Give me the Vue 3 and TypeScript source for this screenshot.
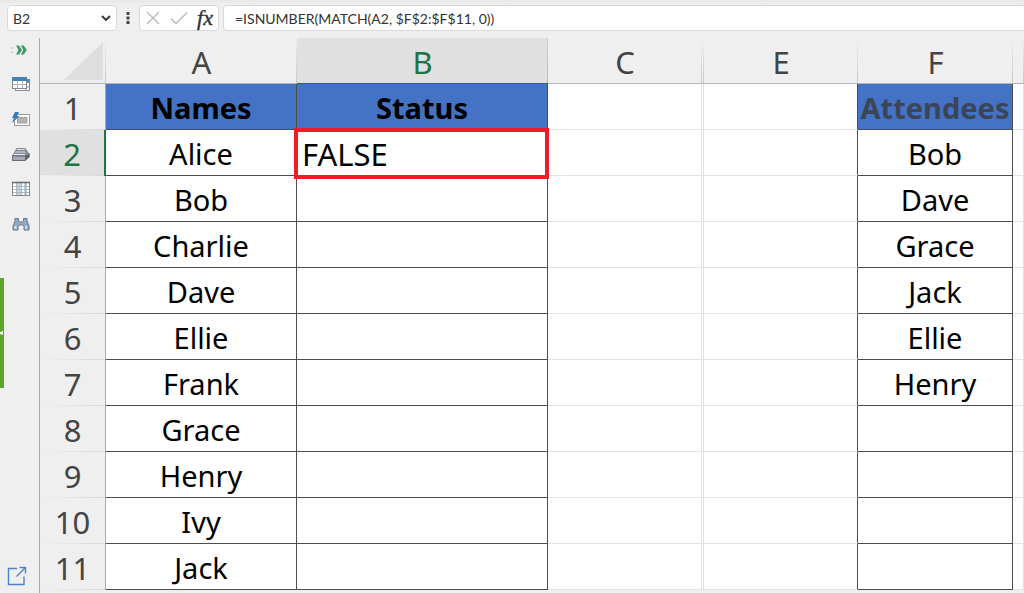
<script setup lang="ts">
import { ref } from 'vue'

interface Row {
  n: number
  name: string
  status: string
  attendee: string
}

const nameBox = ref('B2')
const formula = ref('=ISNUMBER(MATCH(A2, $F$2:$F$11, 0))')
const columns = ['A', 'B', 'C', '', 'E', 'F', '']

const names = ['Names', 'Alice', 'Bob', 'Charlie', 'Dave', 'Ellie', 'Frank', 'Grace', 'Henry', 'Ivy', 'Jack']
const attendees = ['Attendees', 'Bob', 'Dave', 'Grace', 'Jack', 'Ellie', 'Henry']

const rows: Row[] = names.map((name, i) => ({
  n: i + 1,
  name,
  status: i === 0 ? 'Status' : i === 1 ? 'FALSE' : '',
  attendee: attendees[i] ?? '',
}))
</script>

<template>
  <div class="app">
    <header class="bar">
      <div class="box name-box">
        <input v-model="nameBox" class="name-input" type="text" aria-label="Name box" />
        <button class="plain" type="button" aria-label="Show names">
          <svg width="12" height="8" viewBox="0 0 12 8"><path d="M2 2 6 6 10 2" fill="none" stroke="#333" stroke-width="1.9" /></svg>
        </button>
      </div>
      <svg class="dots" width="4" height="14" viewBox="0 0 4 14" fill="#444">
        <rect x=".5" y="1" width="3" height="3" /><rect x=".5" y="5.5" width="3" height="3" /><rect x=".5" y="10" width="3" height="3" />
      </svg>
      <div class="box tools">
        <button class="plain" type="button" aria-label="Cancel">
          <svg width="16" height="16" viewBox="0 0 16 16"><path d="M2 2 14 14M14 2 2 14" fill="none" stroke="#b9b9b9" stroke-width="1.3" /></svg>
        </button>
        <button class="plain" type="button" aria-label="Enter">
          <svg width="20" height="16" viewBox="0 0 20 16"><path d="M2 8.5 7 13.5 18 2.5" fill="none" stroke="#b9b9b9" stroke-width="1.4" /></svg>
        </button>
        <button class="plain fx" type="button" aria-label="Insert function">fx</button>
      </div>
      <input v-model="formula" class="box formula" type="text" aria-label="Formula bar" />
    </header>

    <div class="body">
      <nav class="side" aria-label="Tools">
        <button class="plain tool expand" type="button" aria-label="Expand">
          <svg width="20" height="12" viewBox="0 0 20 12">
            <path d="M0 4h1.500M0 8h1.500" stroke="#bbb" stroke-width="1.300" />
            <path d="M5 1.500h3l3 4.500-3 4.500H5L7.500 6zM9.800 1.500h3l3 4.500-3 4.500h-3L12.300 6z" fill="#3f9a68" />
          </svg>
        </button>
        <button class="plain tool" type="button" aria-label="Tables">
          <svg width="20" height="16" viewBox="0 0 20 16">
            <rect x="4.500" y="3.500" width="14" height="11" fill="#fff" stroke="#8a9098" />
            <path d="M4 3h15v4H4z" fill="#5d8fc2" />
            <path d="M15 7v7M5 11h13" stroke="#8a9098" />
            <rect x="1.500" y="1.500" width="14" height="11" fill="#fff" stroke="#858b93" />
            <path d="M1 1h15v4H1z" fill="#4580bb" />
            <path d="M6.500 5v7M11.500 5v7M2 8.500h13" stroke="#b2b7bd" />
          </svg>
        </button>
        <button class="plain tool" type="button" aria-label="Quick form">
          <svg width="20" height="16" viewBox="0 0 20 16">
            <rect x="3.500" y="3.500" width="15" height="11" fill="#fff" stroke="#9a9a9a" />
            <rect x="6.500" y="6.500" width="9.500" height="5.500" fill="#b3b3b3" stroke="#a3a3a3" />
            <path d="M4 1h4L6 5h2.500L1 12l2-5H1z" fill="#3979b8" />
          </svg>
        </button>
        <button class="plain tool" type="button" aria-label="Workbooks">
          <svg width="20" height="16" viewBox="0 0 20 16">
            <path d="M5.500 2h9l4 6v3l-4 3.500H1.500v-5z" fill="#8e939d" />
            <path d="M6 2.500h8l1 2H5z" fill="#e5e7ea" stroke="#777e88" stroke-width=".8" />
            <path d="M4.500 5h9.500l1.500 2H3z" fill="#dde0e5" stroke="#777e88" stroke-width=".8" />
            <path d="M3 7.500h11l1 2H1.500z" fill="#eceef1" stroke="#777e88" stroke-width=".8" />
            <path d="M1.500 10h13v4.500h-13z" fill="#a6a8b5" stroke="#666b78" />
            <path d="m14.500 10 4-3v4l-4 3.500z" fill="#59616d" />
          </svg>
        </button>
        <button class="plain tool" type="button" aria-label="Columns">
          <svg width="20" height="16" viewBox="0 0 20 16">
            <rect x="1.500" y="1" width="17" height="14" fill="#fff" />
            <path d="M6 2h4v13H6zM13 2h3v13h-3z" fill="#c2d6ea" />
            <path d="M1.500 5.500h17M1.500 8.500h17M1.500 11.500h17M5.500 1v14M10.500 1v14M14.500 1v14" stroke="#a5a9ad" stroke-width=".8" />
            <rect x="1.500" y="1.500" width="17" height="13" fill="none" stroke="#888" />
            <path d="M1 1.500h18" stroke="#6d6d6d" stroke-width="1.600" />
          </svg>
        </button>
        <button class="plain tool" type="button" aria-label="Find">
          <svg width="20" height="16" viewBox="0 0 20 16">
            <path d="M4 2.500h3.500V5l1.500 1h2l1.500-1V2.500H16V5l2 5v4h-5v-4l-1.500-1h-3L7 10v4H2v-4l2-5z" fill="#92a9c1" stroke="#68798c" />
            <path d="M3.500 10h2v3h-2zM14 10h2v3h-2z" fill="#d5e3f1" />
          </svg>
        </button>
        <span class="handle"><svg width="4" height="6" viewBox="0 0 4 6"><path d="M3 1v4L0 4V2z" fill="#f2f7ee" /></svg></span>
        <button class="plain open" type="button" aria-label="Open in window">
          <svg width="20" height="20" viewBox="0 0 20 20" fill="none" stroke="#4a86c5" stroke-width="1.400">
            <path d="M10 2.500H1.500v16H17V10.500M12.500 1.500h6v6M18.500 1.500 9.500 10.500" />
          </svg>
        </button>
      </nav>

      <main class="sheet">
        <table>
          <colgroup>
            <col class="w-num" /><col class="w-a" /><col class="w-b" /><col class="w-c" />
            <col class="w-hidden" /><col class="w-c" /><col class="w-f" /><col />
          </colgroup>
          <thead>
            <tr>
              <th class="corner" scope="col" aria-label="Select all">
                <svg width="40" height="40" viewBox="0 0 40 40"><path d="M40 1v38H1z" fill="#dedede" /></svg>
              </th>
              <th v-for="(c, i) in columns" :key="i" scope="col" :class="{ current: c === 'B' }">{{ c }}</th>
            </tr>
          </thead>
          <tbody>
            <tr v-for="r in rows" :key="r.n" :class="{ titles: r.n === 1 }">
              <th scope="row" :class="{ current: r.n === 2 }">{{ r.n }}</th>
              <td class="ruled">{{ r.name }}</td>
              <td class="ruled status" :class="{ selected: r.n === 2 }">{{ r.status }}</td>
              <td></td>
              <td></td>
              <td class="before"></td>
              <td class="ruled attendee">{{ r.attendee }}</td>
              <td></td>
            </tr>
          </tbody>
        </table>
      </main>
    </div>
  </div>
</template>

<style>
html,
body {
  margin: 0;
  background: #efefef;
}
body {
  overflow: hidden;
}
</style>

<style scoped>
.app {
  display: flex;
  flex-direction: column;
  height: 100vh;
  font-family: "Noto Sans", "Open Sans", sans-serif;
  color: #000;
}
.plain {
  display: flex;
  align-items: center;
  justify-content: center;
  padding: 0;
  border: 0;
  background: none;
}
.bar {
  display: flex;
  align-items: center;
  flex: none;
  box-sizing: border-box;
  height: 38px;
  padding: 0 0 2px 7px;
  background: linear-gradient(#e6e6e6, #efefef 4px);
}
.box {
  box-sizing: border-box;
  height: 26px;
  border: 1px solid #d9d9d9;
  border-radius: 4px;
  background: #fff;
}
.name-box {
  display: flex;
  align-items: center;
  width: 110px;
  padding: 0 4px 0 5px;
}
.name-input {
  flex: 1;
  min-width: 0;
  padding: 0;
  border: 0;
  outline: 0;
  background: none;
  font: 14px Lato, sans-serif;
  color: #333;
}
.dots {
  margin: 0 9px;
}
.tools {
  display: flex;
  align-items: center;
  justify-content: space-between;
  width: 80px;
  margin-right: 4px;
  padding: 0 5px;
}
.fx {
  font: italic 22px/22px "Liberation Serif", serif;
  color: #333;
  -webkit-text-stroke: 0.4px #333;
}
.formula {
  flex: 1;
  min-width: 0;
  padding: 0 11px;
  border-right: 0;
  border-radius: 4px 0 0 4px;
  outline: 0;
  font: 14px Lato, sans-serif;
  color: #333;
}
.body {
  display: flex;
  flex: 1;
  min-height: 0;
}
.side {
  position: relative;
  display: flex;
  flex-direction: column;
  align-items: center;
  flex: none;
  box-sizing: border-box;
  width: 40px;
  border-right: 1px solid #a9a9a9;
}
.tool {
  box-sizing: border-box;
  width: 100%;
  height: 35px;
  padding-left: 2px;
}
.expand {
  height: 28px;
  padding-bottom: 4px;
}
.handle {
  position: absolute;
  left: 0;
  top: 240px;
  display: flex;
  align-items: center;
  width: 4px;
  height: 110px;
  background: #5fa52b;
}
.open {
  margin: auto 6px 7px 0;
}
.sheet {
  flex: 1;
  min-width: 0;
  overflow: hidden;
}
table {
  width: 100%;
  table-layout: fixed;
  border-collapse: separate;
  border-spacing: 0;
  font-size: 29px;
  line-height: 40px;
}
.w-num { width: 66px; }
.w-a { width: 191px; }
.w-b { width: 251px; }
.w-c { width: 154px; }
.w-hidden { width: 2px; }
.w-f { width: 155px; }
th,
td {
  box-sizing: border-box;
  height: 46px;
  padding: 2px 0 0;
  overflow: hidden;
  text-align: center;
  vertical-align: middle;
  white-space: nowrap;
}
th {
  font-size: 31px;
  font-weight: 400;
  color: #444;
}
thead th {
  border-bottom: 1px solid #b5b5b5;
  background: linear-gradient(#efefef, #c9c9c9) right / 1px 100% no-repeat #efefef;
}
thead .current {
  border-bottom-color: #217346;
  background: linear-gradient(#cfcfcf, #b8b8b8) right / 1px 100% no-repeat #e0e0e0;
  color: #217346;
}
thead .corner {
  padding: 0 3px 0 0;
  line-height: 0;
  text-align: right;
}
tbody th {
  border-right: 1px solid #a9a9a9;
  background: linear-gradient(to right, #efefef, #d8d8d8) bottom / 100% 1px no-repeat #efefef;
}
tbody .current {
  border-right: 2px solid #217346;
  background-color: #e0e0e0;
  color: #217346;
}
td {
  border-right: 1px solid #e1e1e1;
  border-bottom: 1px solid #e4e4e4;
  background: #fff;
}
.ruled {
  border-color: #4d4d4d;
}
.before {
  border-right-color: #4d4d4d;
}
.titles .ruled {
  background: #4472c4;
  font-weight: 700;
}
.titles .attendee {
  color: #3b4557;
}
.selected {
  position: relative;
  overflow: visible;
  padding-left: 5px;
  font-size: 31px;
  text-align: left;
}
.selected::after {
  content: "";
  position: absolute;
  inset: -2px -2px -4px -3px;
  border: 4px solid #ee1c25;
}
</style>
